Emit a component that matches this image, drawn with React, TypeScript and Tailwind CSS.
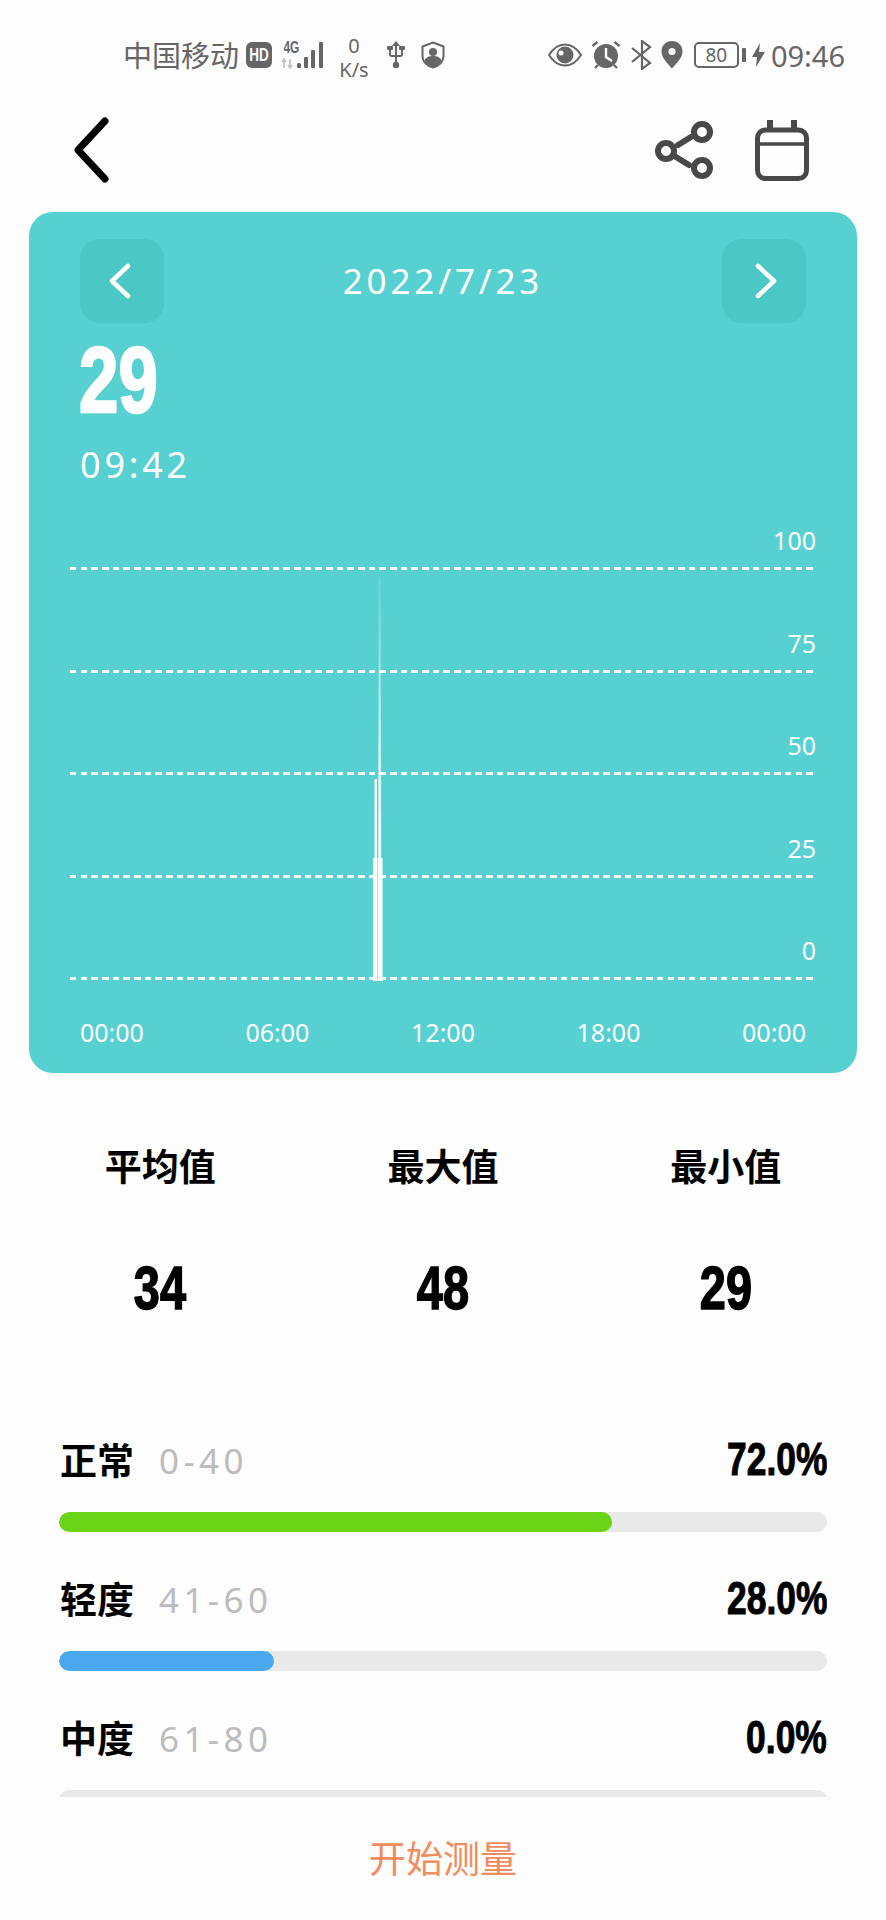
const cjk = "font-['Noto_Sans','Noto_Sans_CJK_SC',sans-serif]";
const narrow = "font-['Liberation_Sans',sans-serif] font-bold inline-block scale-x-[0.77]";

function StatusBar() {
  return (
    <div className="h-[88px] flex items-center pl-[123px] pr-[41px] pt-[22px] text-[#666666] font-['Noto_Sans','Noto_Sans_CJK_SC',sans-serif]">
      <span className="text-[29px] leading-none w-[117px] whitespace-nowrap">中国移动</span>
      <span className="ml-[6px] w-[26px] h-[26px] rounded-[6px] bg-[#666666] flex items-center justify-center">
        <span className="text-white text-[18px] font-bold leading-none inline-block scale-x-[0.75] font-['Liberation_Sans',sans-serif]">HD</span>
      </span>
      <div className="relative ml-[9px] w-[45px] h-[28px]">
        <span className="absolute left-[-1px] top-[-2px] text-[17px] font-bold leading-[17px] inline-block scale-x-[0.7] font-['Liberation_Sans',sans-serif]">4G</span>
        <svg className="absolute left-0 top-0" width="45" height="28" viewBox="0 0 45 28">
          <path d="M3 18v9M1 21l2-3 2 3M9 18v9M7 24l2 3 2-3" stroke="#c4c4c4" strokeWidth="1.800" fill="none" />
          <rect x="16" y="22" width="4" height="5" rx="1.500" fill="#666" />
          <rect x="23" y="16" width="4" height="11" rx="1" fill="#666" />
          <rect x="30" y="9" width="4" height="18" rx="1" fill="#666" />
          <rect x="38" y="1" width="4" height="26" rx="1" fill="#666" />
        </svg>
      </div>
      <div className="ml-[12px] w-[32px] flex flex-col items-center text-[20px] leading-[24px] mt-[6px]">
        <span>0</span>
        <span>K/s</span>
      </div>
      <svg className="ml-[16px]" width="20" height="28" viewBox="0 0 20 28" fill="#666">
        <path d="M10 0l4 5h-3v16h-2V5H6z" />
        <circle cx="10" cy="24" r="3.200" />
        <path d="M3 8v5c0 2 1 3 3 3h3v-2H6c-.7 0-1-.4-1-1V8z" />
        <rect x="1" y="5" width="6" height="4" rx="1" />
        <path d="M17 8v5c0 2-1 3-3 3h-3v-2h3c.7 0 1-.4 1-1V8z" />
        <rect x="13" y="5" width="6" height="4" rx="1" />
      </svg>
      <svg className="ml-[15px]" width="24" height="28" viewBox="0 0 24 28">
        <path d="M12 1.500l10.500 4v9.500c0 6-5 10-10.500 11.500C6.500 25 1.500 21 1.500 15V5.500z" fill="none" stroke="#666" strokeWidth="2" />
        <circle cx="12" cy="11" r="4" fill="#666" />
        <path d="M3 20c2-4 5-5 9-5s7 1 9 5c-2 3-5 5-9 6.500-4-1.500-7-3.500-9-6.500z" fill="#666" />
      </svg>
      <div className="flex-1" />
      <svg width="34" height="24" viewBox="0 0 34 24">
        <path d="M1 12C6 4 11 1.500 17 1.500S28 4 33 12c-5 8-10 10.500-16 10.500S6 20 1 12z" fill="none" stroke="#666" strokeWidth="2" />
        <circle cx="17" cy="12" r="8.500" fill="#666" />
        <circle cx="13" cy="10" r="2.500" fill="#fdfdfd" />
      </svg>
      <svg className="ml-[9px]" width="30" height="30" viewBox="0 0 30 30">
        <circle cx="15" cy="16" r="12" fill="#666" />
        <path d="M15 8v9l6 4" stroke="#fdfdfd" strokeWidth="2.400" fill="none" />
        <path d="M1.500 6l5-4M28.500 6l-5-4M4 28l3-3M26 28l-3-3" stroke="#666" strokeWidth="2.400" />
      </svg>
      <svg className="ml-[9px]" width="22" height="30" viewBox="0 0 22 30" fill="none" stroke="#666" strokeWidth="2.200">
        <path d="M2 8l18 15-8 6V1l8 6L2 22" />
      </svg>
      <svg className="ml-[9px]" width="22" height="28" viewBox="0 0 22 28">
        <path d="M11 0C5 0 .5 4.500.5 10.500.5 17 7 23 11 27.500 15 23 21.500 17 21.500 10.500 21.500 4.500 17 0 11 0z" fill="#666" />
        <circle cx="11" cy="10.500" r="3.600" fill="#fdfdfd" />
      </svg>
      <div className="ml-[11px] w-[45px] h-[26px] rounded-[5px] border-2 border-[#666666] flex items-center justify-center text-[19px] leading-none">80</div>
      <div className="ml-[3px] w-[4px] h-[14px] rounded-[1px] bg-[#666666]" />
      <svg className="ml-[6px]" width="13" height="24" viewBox="0 0 13 24" fill="#666">
        <path d="M8 0L0 14h5l-1 10 9-15H7z" />
      </svg>
      <span className="ml-[6px] text-[29px] leading-none">09:46</span>
    </div>
  );
}

function Header() {
  return (
    <div className="h-[124px] flex items-center pl-[74px] pr-[77px] pb-[1px]">
      <svg width="36" height="66" viewBox="0 0 36 66" fill="none" stroke="#000" strokeWidth="7" strokeLinecap="round" strokeLinejoin="round">
        <path d="M31 4L4 33l27 29" />
      </svg>
      <div className="flex-1" />
      <svg width="58" height="58" viewBox="0 0 58 58" fill="none" stroke="#484848" strokeWidth="6" strokeLinecap="round">
        <circle cx="47" cy="11" r="8" />
        <circle cx="11" cy="30" r="8" />
        <circle cx="47" cy="47" r="8" />
        <path d="M23 24l13-8M21 36l13 8" />
      </svg>
      <svg className="ml-[42px]" width="54" height="62" viewBox="0 0 54 62" fill="none" stroke="#484848" strokeWidth="5">
        <rect x="2.500" y="11" width="49" height="48.500" rx="8" />
        <path d="M2 25h50" strokeWidth="3.500" />
        <path d="M15 1v10M39 1v10" strokeWidth="6" />
      </svg>
    </div>
  );
}

function NavButton({ dir }: { dir: "left" | "right" }) {
  return (
    <div className={dir === "left" ? "w-[84px] h-[84px] rounded-[20px] bg-[#4bc7c5] flex items-center justify-center pr-[4px]" : "w-[84px] h-[84px] rounded-[20px] bg-[#4bc7c5] flex items-center justify-center pl-[4px]"}>
      <svg width="22" height="36" viewBox="0 0 22 36" fill="none" stroke="#fff" strokeWidth="4.500" strokeLinecap="round" strokeLinejoin="round">
        <path d={dir === "left" ? "M19 3L3 18l16 15" : "M3 3l16 15L3 33"} />
      </svg>
    </div>
  );
}

function Chart() {
  const ys = ["100", "75", "50", "25", "0"];
  return (
    <div className="relative ml-[-11px] mr-[-9px]">
      <div className="flex flex-col">
        {ys.map((y, i) => (
          <div key={y} className={i === 0 ? "h-[46px] flex flex-col justify-end items-end" : "h-[102.500px] flex flex-col justify-end items-end"}>
            <span className="text-[25px] leading-[32px] mb-[11px] mr-[-2px] text-white">{y}</span>
            <div className="w-full h-[3px] shrink-0 bg-[repeating-linear-gradient(90deg,#fff_0,#fff_6.500px,transparent_6.500px,transparent_10.670px)]" />
          </div>
        ))}
      </div>
      <svg className="absolute left-[300px] top-[42px]" width="20" height="420" viewBox="0 0 20 420">
        <defs>
          <linearGradient id="fade" x1="0" y1="0" x2="0" y2="1">
            <stop offset="0" stopColor="#fff" stopOpacity="0.1" />
            <stop offset="0.6" stopColor="#fff" stopOpacity="0.8" />
            <stop offset="1" stopColor="#fff" stopOpacity="0.9" />
          </linearGradient>
        </defs>
        <path d="M8.800 11 L10.600 11 L11.300 340 L8 340 Z" fill="url(#fade)" />
        <rect x="4.500" y="213" width="2.500" height="120" fill="#fff" fillOpacity="0.95" />
        <rect x="3" y="292" width="4" height="123" fill="#fff" />
        <rect x="7.500" y="292" width="5" height="123" fill="#fff" />
      </svg>
    </div>
  );
}

function Card() {
  const xs = ["00:00", "06:00", "12:00", "18:00", "00:00"];
  return (
    <div className="mx-[29px] h-[861px] rounded-[24px] bg-[#56d0d1] px-[52px] pt-[27px] text-white font-['Noto_Sans','Noto_Sans_CJK_SC',sans-serif]">
      <div className="flex items-center justify-between mx-[-1px]">
        <NavButton dir="left" />
        <span className="text-[35px] leading-none tracking-[3.800px] mb-[2px]">2022/7/23</span>
        <NavButton dir="right" />
      </div>
      <div className="h-[90px] mt-[12px] ml-[-2px]">
        <span className={`${narrow} origin-left text-[92px] leading-[90px] [-webkit-text-stroke:2.500px]`}>29</span>
      </div>
      <div className="text-[36px] leading-[48px] tracking-[3.800px] mt-[16px] ml-[-1px]">09:42</div>
      <div className="mt-[35px]">
        <Chart />
      </div>
      <div className="flex justify-between mt-[36px] mx-[-1px] text-[25px] leading-[32px]">
        {xs.map((x, i) => (
          <span key={i}>{x}</span>
        ))}
      </div>
    </div>
  );
}

function Stats() {
  const items = [
    ["平均值", "34"],
    ["最大值", "48"],
    ["最小值", "29"],
  ];
  return (
    <div className="grid grid-cols-3 px-[19px] mt-[70px] text-black">
      {items.map(([l, v]) => (
        <div key={l} className="flex flex-col items-center">
          <span className={`${cjk} font-bold text-[37px] leading-[48px]`}>{l}</span>
          <span className={`${narrow} text-[61px] leading-[70px] mt-[62px] [-webkit-text-stroke:1.500px]`}>{v}</span>
        </div>
      ))}
    </div>
  );
}

function Row({ name, range, pct, fill, color }: { name: string; range: string; pct: string; fill: number; color: string }) {
  return (
    <div className="h-[139px] shrink-0">
      <div className="flex items-center h-[52px] pl-[1px]">
        <span className={`${cjk} font-bold text-[37px] leading-[52px] text-black`}>{name}</span>
        <span className="ml-[25px] text-[35px] leading-[52px] tracking-[4.400px] text-[#bcbcbc] font-['Noto_Sans',sans-serif]">{range}</span>
        <span className={`${narrow} origin-right ml-auto text-[46px] leading-[52px] text-black mt-[-4px] [-webkit-text-stroke:1px]`}>{pct}</span>
      </div>
      <div className="mt-[25px] h-[20px] rounded-full bg-[#e9e9e9] overflow-hidden">
        {fill > 0 && <div className="h-full rounded-full" style={{ width: `${fill}%`, backgroundColor: color }} />}
      </div>
    </div>
  );
}

export default function App() {
  return (
    <div className="w-[886px] h-[1920px] bg-[#fdfdfd] flex flex-col overflow-hidden">
      <StatusBar />
      <Header />
      <Card />
      <Stats />
      <div className="mx-[59px] mt-[104px] pt-[8px] h-[370px] overflow-hidden flex flex-col shrink-0">
        <Row name="正常" range="0-40" pct="72.0%" fill={72} color="#6cd416" />
        <Row name="轻度" range="41-60" pct="28.0%" fill={28} color="#4aa9ee" />
        <Row name="中度" range="61-80" pct="0.0%" fill={0} color="#e9e9e9" />
      </div>
      <div className={`${cjk} flex-1 flex items-center justify-center text-[37px] text-[#f08c5e]`}>开始测量</div>
    </div>
  );
}
